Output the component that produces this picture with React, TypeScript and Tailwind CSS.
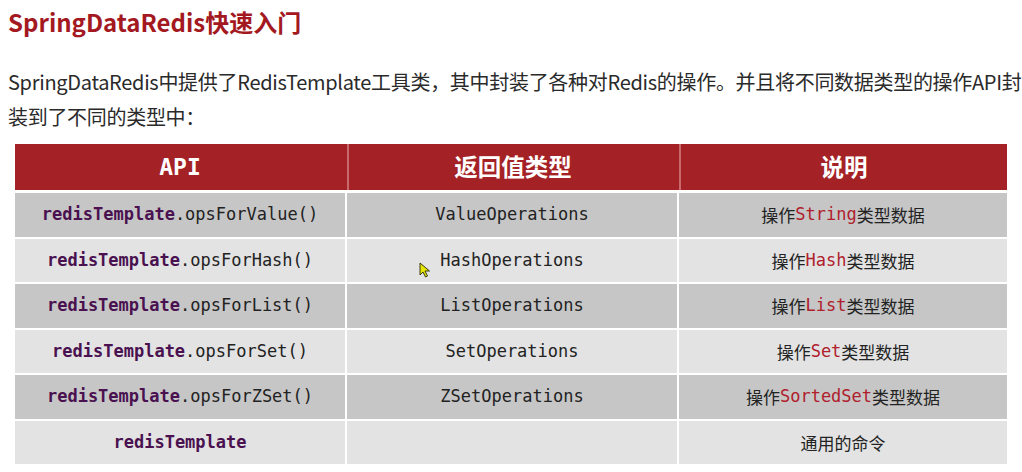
import React from 'react';

const mono = "font-['DejaVu_Sans_Mono','Liberation_Mono',monospace]";
const cjk = "font-['Noto_Sans_CJK_SC','Noto_Sans',sans-serif]";

type Row = { method?: string; ret: string; pre: string; type?: string; post: string };

const rows: Row[] = [
  { method: '.opsForValue()', ret: 'ValueOperations', pre: '操作', type: 'String', post: '类型数据' },
  { method: '.opsForHash()', ret: 'HashOperations', pre: '操作', type: 'Hash', post: '类型数据' },
  { method: '.opsForList()', ret: 'ListOperations', pre: '操作', type: 'List', post: '类型数据' },
  { method: '.opsForSet()', ret: 'SetOperations', pre: '操作', type: 'Set', post: '类型数据' },
  { method: '.opsForZSet()', ret: 'ZSetOperations', pre: '操作', type: 'SortedSet', post: '类型数据' },
  { ret: '', pre: '通用的命令', post: '' },
];

const Cursor = () => (
  <svg className="absolute left-[419px] top-[262px]" width="12" height="16" viewBox="0 0 12 16">
    <path d="M1 1 L1 13 L4 10 L6.5 15 L8.5 14 L6 9 L10.5 9 Z" fill="#e6e600" stroke="#3a3a10" strokeWidth="1" strokeLinejoin="round" />
  </svg>
);

export default function App() {
  return (
    <div className={`relative w-[1022px] h-[472px] bg-white overflow-hidden ${cjk}`}>
      {/* Title */}
      <h1 className="pl-[8px] pt-[6px] h-[36px] text-[24px] leading-[32px] font-bold text-[#a3191f]">
        SpringDataRedis快速入门
      </h1>

      {/* Intro */}
      <p className="pl-[8px] mt-[28px] text-[20px] leading-[35px] text-[#2a2a2a] whitespace-nowrap tracking-[-0.3px]">
        SpringDataRedis中提供了RedisTemplate工具类，其中封装了各种对Redis的操作。并且将不同数据类型的操作API封
        <br />
        装到了不同的类型中：
      </p>

      {/* Table */}
      <div className="ml-[15px] mt-[10px] w-[992px] flex flex-col">
        <div className="grid grid-cols-[330px_330px_328px] gap-x-[2px] h-[46px] bg-[#a42226] text-white font-bold">
          <div className={`flex items-center justify-center text-[23px] ${mono}`}>API</div>
          <div className="flex items-center justify-center text-[23.5px] border-l-2 border-[#c86a6c]">返回值类型</div>
          <div className="flex items-center justify-center text-[23.5px] border-l-2 border-[#c86a6c]">说明</div>
        </div>
        <div className="flex flex-col gap-y-[2px] mt-[3px]">
          {rows.map((r, i) => (
            <div key={i} className="grid grid-cols-[330px_330px_328px] gap-x-[2px] h-[43.5px] text-[17px]">
              <div className={`flex items-center justify-center ${mono} ${i % 2 === 0 ? 'bg-[#c6c6c6]' : 'bg-[#e3e3e3]'}`}>
                <span className="font-bold text-[#4a1150]">redisTemplate</span>
                {r.method && <span className="text-[#222]">{r.method}</span>}
              </div>
              <div className={`flex items-center justify-center ${mono} text-[#222] ${i % 2 === 0 ? 'bg-[#c6c6c6]' : 'bg-[#e3e3e3]'}`}>
                {r.ret}
              </div>
              <div className={`flex items-center justify-center text-[#222] ${i % 2 === 0 ? 'bg-[#c6c6c6]' : 'bg-[#e3e3e3]'}`}>
                <span>{r.pre}</span>
                {r.type && <span className={`${mono} text-[#b0202c]`}>{r.type}</span>}
                <span>{r.post}</span>
              </div>
            </div>
          ))}
        </div>
      </div>

      <Cursor />
    </div>
  );
}
